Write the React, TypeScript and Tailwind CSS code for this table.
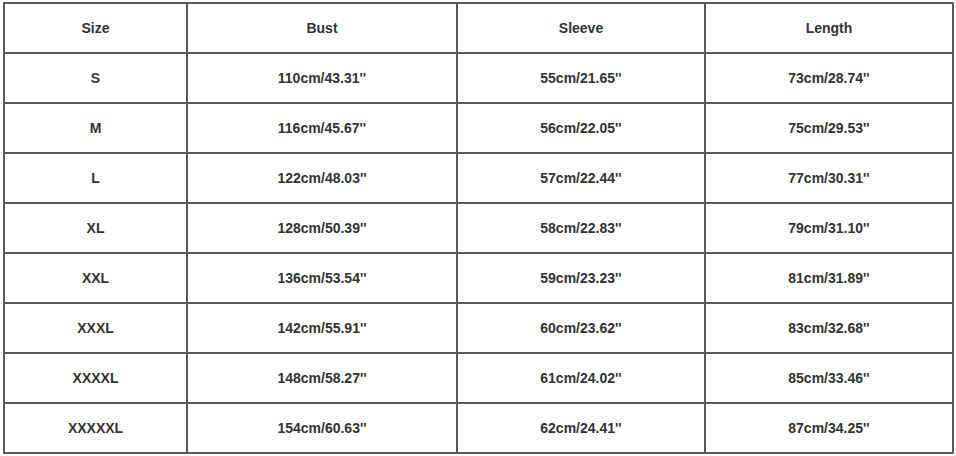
const headers = ["Size", "Bust", "Sleeve", "Length"];

const rows = [
  ["S", "110cm/43.31''", "55cm/21.65''", "73cm/28.74''"],
  ["M", "116cm/45.67''", "56cm/22.05''", "75cm/29.53''"],
  ["L", "122cm/48.03''", "57cm/22.44''", "77cm/30.31''"],
  ["XL", "128cm/50.39''", "58cm/22.83''", "79cm/31.10''"],
  ["XXL", "136cm/53.54''", "59cm/23.23''", "81cm/31.89''"],
  ["XXXL", "142cm/55.91''", "60cm/23.62''", "83cm/32.68''"],
  ["XXXXL", "148cm/58.27''", "61cm/24.02''", "85cm/33.46''"],
  ["XXXXXL", "154cm/60.63''", "62cm/24.41''", "87cm/34.25''"],
];

export default function App() {
  return (
    <div className="w-[956px] h-[456px] bg-white pt-[2px] pl-[3px]">
      <div
        className="grid grid-cols-[181px_268px_246px_246px] auto-rows-[48px] gap-[2px] p-[2px] bg-[#5a5a5a] w-[951px] text-[14px] font-bold text-[#333]"
        style={{ fontFamily: '"Liberation Sans", Arial, sans-serif' }}
      >
        {headers.map((h) => (
          <div key={h} className="bg-white flex items-center justify-center">
            {h}
          </div>
        ))}
        {rows.map((r) =>
          r.map((cell, i) => (
            <div key={r[0] + i} className="bg-white flex items-center justify-center">
              {cell}
            </div>
          ))
        )}
      </div>
    </div>
  );
}
